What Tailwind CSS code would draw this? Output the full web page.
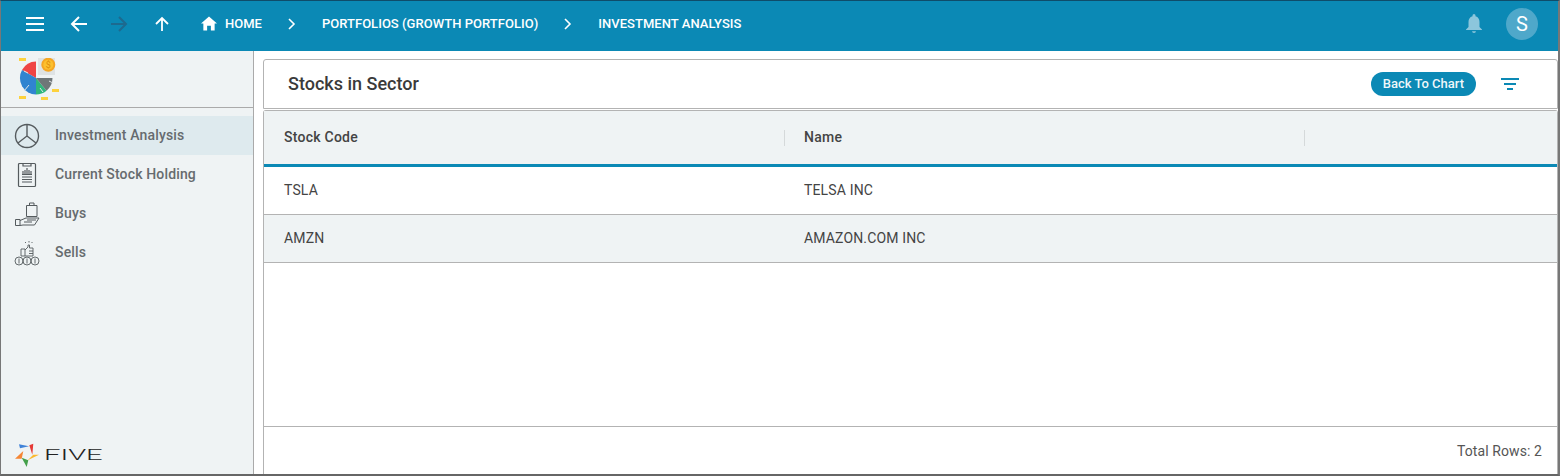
<!DOCTYPE html>
<html lang="en">
<head>
    <meta charset="UTF-8">
    <title>Investment Analysis</title>
    <script src="https://cdn.jsdelivr.net/npm/@tailwindcss/browser@4"></script>
</head>
<body class="h-[476px] w-[1560px] overflow-hidden bg-white font-['Roboto',sans-serif]">
    <div class="flex h-[476px] flex-col border-t border-r-2 border-b-2 border-l border-t-[#0f4c6a] border-r-[#777] border-b-[#666] border-l-[#777]">
        <!-- top bar -->
        <header class="flex h-[50px] shrink-0 items-center bg-[#0b89b5] pb-[5px] text-white">
            <button class="ml-[23px] w-[22px]">
                <svg class="block" width="22" height="22" viewBox="0 0 22 22" fill="none" stroke="#fff" stroke-width="2"><path d="M2 5h18M2 11h18M2 17h18"/></svg>
            </button>
            <svg class="ml-[23px]" width="20" height="20" viewBox="0 0 20 20" fill="none" stroke="#fff" stroke-width="2"><path d="M18 10H3M10 3l-7 7 7 7"/></svg>
            <svg class="ml-[21px]" width="20" height="20" viewBox="0 0 20 20" fill="none" stroke="#1d6a8f" stroke-width="2"><path d="M1 10h15M9 3l7 7-7 7"/></svg>
            <svg class="ml-[25px]" width="14" height="16" viewBox="0 0 14 16" fill="none" stroke="#fff" stroke-width="1.800"><path d="M7 15V2M1 8l6-6 6 6"/></svg>
            <svg class="ml-[32px]" width="16" height="15" viewBox="0 0 17 15" fill="#fff"><path d="M8.500 0 0 7.500h2.500V15h4v-5h4v5h4V7.500H17z"/></svg>
            <span class="ml-[8px] text-[13px] font-medium">HOME</span>
            <svg class="ml-[26px]" width="8" height="12" viewBox="0 0 8 12" fill="none" stroke="#fff" stroke-width="1.600"><path d="M1 1l5 5-5 5"/></svg>
            <span class="ml-[26px] text-[13px] font-medium tracking-[0.03px]">PORTFOLIOS (GROWTH PORTFOLIO)</span>
            <svg class="ml-[26px]" width="8" height="12" viewBox="0 0 8 12" fill="none" stroke="#fff" stroke-width="1.600"><path d="M1 1l5 5-5 5"/></svg>
            <span class="ml-[26px] text-[13px] font-medium tracking-[0.05px]">INVESTMENT ANALYSIS</span>
            <svg class="ml-auto" width="16" height="20" viewBox="0 0 16 20" fill="#8cc6dc"><path d="M8 0a1.500 1.500 0 0 1 1.500 1.500v.7C12.300 2.900 13.500 5.300 13.500 8v5l2.500 2.500v.5H0v-.5L2.500 13V8c0-2.700 1.200-5.100 4-5.800v-.7A1.500 1.500 0 0 1 8 0zM6 17.200h4A2 2 0 0 1 8 19a2 2 0 0 1-2-1.800z"/></svg>
            <div class="mr-[20px] ml-[24px] flex h-8 w-8 items-center justify-center rounded-full bg-[#4fa8ca] text-[20px]">S</div>
        </header>

        <div class="flex min-h-0 flex-1">
            <!-- sidebar -->
            <aside class="flex w-[253px] shrink-0 flex-col border-r border-[#aaa] bg-[#eff3f4]">
                <div class="flex h-[57px] shrink-0 items-start border-b border-[#aaa] pt-[7px] pl-[18px]">
                    <svg width="42" height="42" viewBox="0 0 42 42">
                        <rect x="0" y="0" width="7" height="3" fill="#fdd23e"/>
                        <rect x="19" y="0" width="17" height="17" fill="#dfe3e4"/>
                        <circle cx="29.300" cy="6.700" r="7" fill="#f5a623"/>
                        <circle cx="29.300" cy="6.700" r="5" fill="#fcc02e"/>
                        <text x="29.300" y="10" text-anchor="middle" font-size="9" font-family="Roboto" fill="#e08e0b">$</text>
                        <path d="M17 3.500V20L3 12a16.500 16.500 0 0 1 14-8.500z" fill="#ef4444"/>
                        <path d="M17 20 3 12a16.500 16.500 0 0 0 14 24.500z" fill="#3084d0"/>
                        <path d="M17 20l10.500 12.700A16.500 16.500 0 0 1 17 36.500z" fill="#2fb67c"/>
                        <path d="M17 20h16.500a16.500 16.500 0 0 1-6 12.700z" fill="#6f7678"/>
                        <path d="M5 13l4 2M5 33l5-6M21 30l3 4M30 23l4 2" stroke="#e3e7e8" stroke-width="1"/>
                        <rect x="33" y="31" width="7" height="3" fill="#fdd23e"/>
                        <rect x="0" y="38" width="7" height="3" fill="#fdd23e"/>
                        <rect x="22" y="39" width="7" height="3" fill="#fdd23e"/>
                    </svg>
                </div>
                <nav class="pt-2 text-[14px] font-medium tracking-[0.15px] text-[#666b6e]">
                    <a class="flex h-[39px] items-center bg-[#deeaee]">
                        <svg class="ml-[13px]" width="26" height="26" viewBox="0 0 26 26" fill="none" stroke="#555b5e" stroke-width="1.400"><circle cx="13" cy="13" r="11.500"/><path d="M13 1.500V13l-9 7M13 13l9 7"/></svg>
                        <span class="ml-[15px]">Investment Analysis</span>
                    </a>
                    <a class="flex h-[39px] items-center">
                        <svg class="ml-[13px]" width="26" height="26" viewBox="0 0 26 26" fill="none" stroke="#555b5e" stroke-width="1.200"><rect x="4.500" y="1.500" width="17" height="23" rx="1"/><path d="M9 1.500v2.500h8V1.500M8 12.500h10M8 15h10M8 17.500h10M8 20h10M9 12V9M11 12V8M13 12V6M15 12V8M17 12V9"/></svg>
                        <span class="ml-[15px]">Current Stock Holding</span>
                    </a>
                    <a class="flex h-[39px] items-center">
                        <svg class="ml-[13px]" width="26" height="26" viewBox="0 0 26 26" fill="none" stroke="#555b5e" stroke-width="1"><path d="M12.500 4.500h10.500v11H12.500zM15.500 4.500V2h4.500v2.500M1.500 18.500h4.500v6H1.500zM6 19.500l6-2.500h13l-4.500 7H9l-3 .5M10 21h8M13 19h9"/></svg>
                        <span class="ml-[15px]">Buys</span>
                    </a>
                    <a class="flex h-[39px] items-center">
                        <svg class="ml-[13px]" width="26" height="26" viewBox="0 0 26 26" fill="none" stroke="#555b5e" stroke-width="0.900"><circle cx="5" cy="21" r="4"/><circle cx="13" cy="21" r="4"/><circle cx="21" cy="21" r="4"/><path d="M7 9h4v7H7zM11 10l3-3V5h1.500v3H19v8h-8M12 3l-1-1M15 2.500V1M17.500 3l1-1M5 18.500v5M13 18.500v5M21 18.500v5M15 11h4M15 13.500h4"/></svg>
                        <span class="ml-[15px]">Sells</span>
                    </a>
                </nav>
                <div class="mt-auto flex h-[38px] items-start pt-[7px] pl-[14px]">
                    <svg width="24" height="24" viewBox="0 0 24 24">
                        <path d="M4 1.300l10 2-9 2z" fill="#3f82d8"/>
                        <path d="M18.300.7l-4 1.600 3 9.400z" fill="#e53935"/>
                        <path d="M24 11.700l-11.300 5.600 5.600-5.600z" fill="#fbb92d"/>
                        <path d="M6.700 14.700l6.600 2.600-1.600 6.700z" fill="#43a04a"/>
                        <path d="M0 15.700L8.300 8l-1.600 7.700z" fill="#f58634"/>
                    </svg>
                    <span class="mt-[5px] ml-[5px] block origin-left scale-x-[2.080] text-[14px] leading-none font-light text-[#222]">FIVE</span>
                </div>
            </aside>

            <!-- main column -->
            <main class="flex min-w-0 flex-1 flex-col pt-2 pl-[9px]">
                <div class="flex h-[50px] shrink-0 items-center rounded-t-[3px] border border-[#b3b3b3] pb-[2px] pl-6">
                    <h1 class="text-[18px] font-medium text-[#3a3a3a]">Stocks in Sector</h1>
                    <button class="mt-[2px] ml-auto h-[24px] rounded-full bg-[#0b89b5] px-3 text-[13px] font-medium text-white/95">Back To Chart</button>
                    <svg class="mt-[2px] mr-[38px] ml-[25px]" width="18" height="12" viewBox="0 0 18 12" fill="#0b89b5"><path d="M0 0h18v2H0zM3 5h12v2H3zM6 10h6v2H6z"/></svg>
                </div>
                <div class="mt-[1px] flex min-h-0 flex-1 flex-col rounded-t-[3px] border-x border-t border-[#b3b3b3]">
                    <div class="grid h-[56px] shrink-0 grid-cols-[521px_520px_1fr] items-center border-b-[3px] border-[#0b89b5] bg-[#eff3f4] text-[14px] font-medium tracking-[0.25px] text-[#444]">
                        <div class="flex h-[16px] items-center border-r border-[#d5d9da] pl-5">Stock Code</div>
                        <div class="flex h-[16px] items-center border-r border-[#d5d9da] pl-[19px]">Name</div>
                        <div></div>
                    </div>
                    <div class="grid h-[48px] shrink-0 grid-cols-[520px_520px_1fr] items-center border-b border-[#b3b3b3] text-[14px] tracking-[0.15px] text-[#444]">
                        <div class="pl-5">TSLA</div>
                        <div class="pl-5">TELSA INC</div>
                    </div>
                    <div class="grid h-[48px] shrink-0 grid-cols-[520px_520px_1fr] items-center border-b border-[#b3b3b3] bg-[#eff3f4] text-[14px] tracking-[0.15px] text-[#444]">
                        <div class="pl-5">AMZN</div>
                        <div class="pl-5">AMAZON.COM INC</div>
                    </div>
                    <div class="flex-1"></div>
                    <div class="flex h-[48px] shrink-0 items-center justify-end border-t border-[#b3b3b3] pt-[1px] pr-[15px] text-[14px] tracking-[0.1px] text-[#555]">Total Rows: 2</div>
                </div>
            </main>
        </div>
    </div>
</body>
</html>
